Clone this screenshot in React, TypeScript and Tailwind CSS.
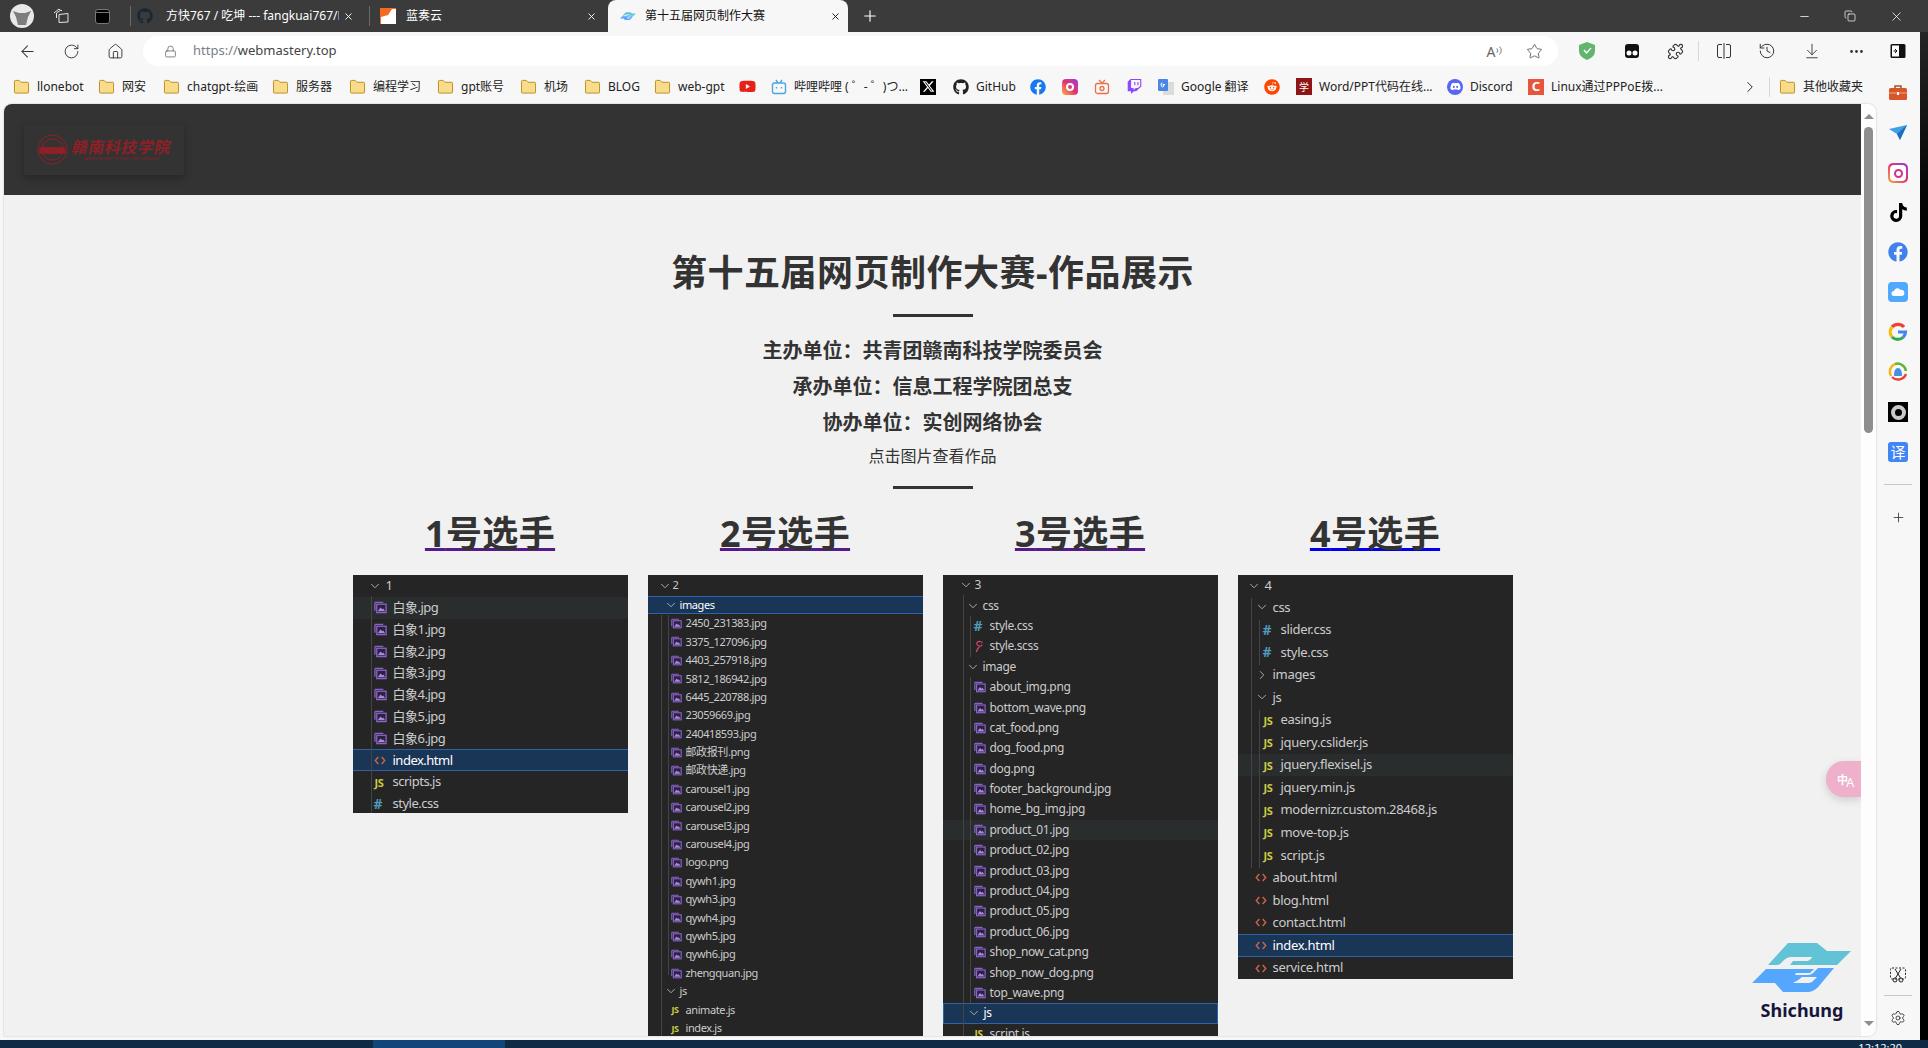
import clsx from 'clsx';
import {
  ArrowDownToLine,
  ArrowLeft,
  ChevronDown,
  ChevronRight,
  Copy,
  History,
  House,
  Lock,
  Minus,
  MoreHorizontal,
  Plus,
  Puzzle,
  RotateCw,
  Settings,
  Star,
  X,
} from 'lucide-react';
import { FaDiscord, FaFacebook, FaGithub, FaReddit, FaTwitch, FaYoutube } from 'react-icons/fa';
import { FaTiktok, FaXTwitter } from 'react-icons/fa6';

type Kind = 'open' | 'closed' | 'img' | 'js' | 'css' | 'scss' | 'html' | 'none';

type Row = {
  label: string;
  kind: Kind;
  pad: string;
  slot: string;
  selected?: boolean;
  boxed?: boolean;
  hover?: boolean;
};

function FileIcon({ kind, imgClass, jsClass }: { kind: Kind; imgClass: string; jsClass: string }) {
  if (kind === 'open') return <ChevronDown size={14} strokeWidth={1.4} className="text-[#c5c5c5]" />;
  if (kind === 'closed') return <ChevronRight size={14} strokeWidth={1.4} className="text-[#c5c5c5]" />;
  if (kind === 'img')
    return (
      <svg viewBox="0 0 14 14" className={imgClass}>
        <path d="M1 1.500h9M1 1.500v9" stroke="#8a63c9" strokeWidth="1.400" fill="none" />
        <rect x="3" y="3.500" width="10" height="9" fill="#2b2140" stroke="#8a63c9" strokeWidth="1.400" />
        <path d="M4 11l3-4 2 2 1-1 2 3z" fill="#a98ad9" />
      </svg>
    );
  if (kind === 'js')
    return <span className={clsx('ml-px leading-none font-bold text-[#cbcb41]', jsClass)}>JS</span>;
  if (kind === 'css')
    return <span className="text-[14px] leading-none font-bold text-[#519aba]">#</span>;
  if (kind === 'scss')
    return (
      <svg viewBox="0 0 12 14" className="h-[13px] w-[11px]">
        <path
          d="M9 3.500C9 1.500 5 .5 3.500 2.500 2 4.500 4 6.500 7 6.500 8.500 6.500 9 5.500 8 5M6 7c-2 2-3 4-3.500 6"
          stroke="#cd4a6b"
          strokeWidth="1.300"
          fill="none"
        />
      </svg>
    );
  if (kind === 'html')
    return (
      <svg viewBox="0 0 14 12" className="h-[11px] w-[12px]">
        <path d="M5 2L1.500 6 5 10M9 2l3.500 4L9 10" stroke="#c9634a" strokeWidth="1.700" fill="none" />
      </svg>
    );
  return null;
}

function Tree({
  rows,
  rowClass,
  guides,
  panelClass,
  imgClass = 'h-[12px] w-[12px]',
  jsClass = 'text-[10px]',
}: {
  rows: Row[];
  rowClass: string;
  guides: string[];
  panelClass?: string;
  imgClass?: string;
  jsClass?: string;
}) {
  return (
    <div className={clsx('relative w-[275px] bg-[#252526] text-[#cccccc]', panelClass)}>
      {rows.map((row, i) => (
        <div
          key={i}
          className={clsx(
            'flex items-center whitespace-nowrap',
            rowClass,
            row.pad,
            row.selected && 'border-y border-[#2f62a8] bg-[#1a3657] text-white',
            row.boxed && 'border border-[#2f62a8] bg-[#1a3657] text-white',
            row.hover && 'bg-[#2a2d2e]',
          )}
        >
          <span className={clsx('flex shrink-0 items-center', row.slot)}>
            <FileIcon kind={row.kind} imgClass={imgClass} jsClass={jsClass} />
          </span>
          <span>{row.label}</span>
        </div>
      ))}
      {guides.map((g) => (
        <div key={g} className={clsx('absolute w-px bg-[#444444]', g)} />
      ))}
    </div>
  );
}

const f1 = { pad: 'pl-[21px]', slot: 'w-[19px]' };
const tree1: Row[] = [
  { label: '1', kind: 'open', pad: 'pl-[15px]', slot: 'w-[18px]' },
  { label: '白象.jpg', kind: 'img', ...f1, hover: true },
  { label: '白象1.jpg', kind: 'img', ...f1 },
  { label: '白象2.jpg', kind: 'img', ...f1 },
  { label: '白象3.jpg', kind: 'img', ...f1 },
  { label: '白象4.jpg', kind: 'img', ...f1 },
  { label: '白象5.jpg', kind: 'img', ...f1 },
  { label: '白象6.jpg', kind: 'img', ...f1 },
  { label: 'index.html', kind: 'html', ...f1, selected: true },
  { label: 'scripts.js', kind: 'js', ...f1 },
  { label: 'style.css', kind: 'css', ...f1 },
];

const f2 = { pad: 'pl-[23px]', slot: 'w-[15px]' };
const d2 = { pad: 'pl-[16px]', slot: 'w-[16px]' };
const tree2: Row[] = [
  { label: '2', kind: 'open', pad: 'pl-[10px]', slot: 'w-[15px]' },
  { label: 'images', kind: 'open', ...d2, selected: true },
  ...[
    '2450_231383.jpg',
    '3375_127096.jpg',
    '4403_257918.jpg',
    '5812_186942.jpg',
    '6445_220788.jpg',
    '23059669.jpg',
    '240418593.jpg',
    '邮政报刊.png',
    '邮政快递.jpg',
    'carousel1.jpg',
    'carousel2.jpg',
    'carousel3.jpg',
    'carousel4.jpg',
    'logo.png',
    'qywh1.jpg',
    'qywh3.jpg',
    'qywh4.jpg',
    'qywh5.jpg',
    'qywh6.jpg',
    'zhengquan.jpg',
  ].map((label): Row => ({ label, kind: 'img', ...f2 })),
  { label: 'js', kind: 'open', ...d2 },
  { label: 'animate.js', kind: 'js', ...f2 },
  { label: 'index.js', kind: 'js', ...f2 },
];

const f3 = { pad: 'pl-[31px]', slot: 'w-[16px]' };
const d3 = { pad: 'pl-[23px]', slot: 'w-[17px]' };
const tree3: Row[] = [
  { label: '3', kind: 'open', pad: 'pl-[16px]', slot: 'w-[16px]' },
  { label: 'css', kind: 'open', ...d3 },
  { label: 'style.css', kind: 'css', ...f3 },
  { label: 'style.scss', kind: 'scss', ...f3 },
  { label: 'image', kind: 'open', ...d3 },
  { label: 'about_img.png', kind: 'img', ...f3 },
  { label: 'bottom_wave.png', kind: 'img', ...f3 },
  { label: 'cat_food.png', kind: 'img', ...f3 },
  { label: 'dog_food.png', kind: 'img', ...f3 },
  { label: 'dog.png', kind: 'img', ...f3 },
  { label: 'footer_background.jpg', kind: 'img', ...f3 },
  { label: 'home_bg_img.jpg', kind: 'img', ...f3 },
  { label: 'product_01.jpg', kind: 'img', ...f3, hover: true },
  { label: 'product_02.jpg', kind: 'img', ...f3 },
  { label: 'product_03.jpg', kind: 'img', ...f3 },
  { label: 'product_04.jpg', kind: 'img', ...f3 },
  { label: 'product_05.jpg', kind: 'img', ...f3 },
  { label: 'product_06.jpg', kind: 'img', ...f3 },
  { label: 'shop_now_cat.png', kind: 'img', ...f3 },
  { label: 'shop_now_dog.png', kind: 'img', ...f3 },
  { label: 'top_wave.png', kind: 'img', ...f3 },
  { label: 'js', kind: 'open', ...d3, boxed: true },
  { label: 'script.js', kind: 'js', ...f3 },
];

const f4 = { pad: 'pl-[25px]', slot: 'w-[18px]' };
const d4 = { pad: 'pl-[17px]', slot: 'w-[18px]' };
const tree4: Row[] = [
  { label: '4', kind: 'open', pad: 'pl-[9px]', slot: 'w-[18px]' },
  { label: 'css', kind: 'open', ...d4 },
  { label: 'slider.css', kind: 'css', ...f4 },
  { label: 'style.css', kind: 'css', ...f4 },
  { label: 'images', kind: 'closed', ...d4 },
  { label: 'js', kind: 'open', ...d4 },
  { label: 'easing.js', kind: 'js', ...f4 },
  { label: 'jquery.cslider.js', kind: 'js', ...f4 },
  { label: 'jquery.flexisel.js', kind: 'js', ...f4, hover: true },
  { label: 'jquery.min.js', kind: 'js', ...f4 },
  { label: 'modernizr.custom.28468.js', kind: 'js', ...f4 },
  { label: 'move-top.js', kind: 'js', ...f4 },
  { label: 'script.js', kind: 'js', ...f4 },
  { label: 'about.html', kind: 'html', ...d4 },
  { label: 'blog.html', kind: 'html', ...d4 },
  { label: 'contact.html', kind: 'html', ...d4 },
  { label: 'index.html', kind: 'html', ...d4, selected: true },
  { label: 'service.html', kind: 'html', ...d4 },
];

function Folder() {
  return (
    <svg viewBox="0 0 18 16" className="h-[15px] w-[17px] shrink-0">
      <path
        d="M1.500 14V2.500a1 1 0 0 1 1-1h4l2 2h7a1 1 0 0 1 1 1V14a1 1 0 0 1-1 1h-13a1 1 0 0 1-1-1z"
        fill="#f8dc8a"
        stroke="#b98d22"
      />
    </svg>
  );
}

function Bookmark({ label, width, icon }: { label?: string; width: string; icon?: React.ReactNode }) {
  return (
    <div className={clsx('flex shrink-0 items-center gap-[7px]', width)}>
      {icon ?? <Folder />}
      {label && <span className="whitespace-nowrap">{label}</span>}
    </div>
  );
}

function ShichungMark({ className }: { className: string }) {
  return (
    <svg viewBox="0 0 100 50" className={className}>
      <path
        d="M16 23L36 1h29l10 8h24L85 23H38l3-4h14q4-1 5-4H39q-4 0-7 3l-4 4q-1 1-4 1z"
        fill="#62c3d6"
      />
      <path
        d="M0 41L14 27h48l-4 4H44l-1 2h13q3 0 5-2l5-5h16L67 44q-4 5-10 6H31l-8-9z"
        fill="#55a6ff"
      />
      <path d="M41 41h16q3 0 5-3l3-3H50q-3 3-9 6z" fill="#f1f1f1" />
    </svg>
  );
}

function TabBar() {
  return (
    <div className="flex h-8 shrink-0 items-center bg-[#3b3b3b] text-xs text-white">
      <svg viewBox="0 0 24 24" className="ml-[10px] h-6 w-6 shrink-0">
        <circle cx="12" cy="12" r="12" fill="#e8e8e8" />
        <path d="M3 7l6 2h6l6-2-3 6-2 8h-8l-2-8z" fill="#7d7d7d" />
      </svg>
      <svg viewBox="0 0 18 18" fill="none" stroke="#e5e5e5" className="ml-[18px] h-[18px] w-[18px] shrink-0">
        <path d="M2 6l5-4 1 1M4.500 11V6l4.500-3 1 1M7 15.500V7.500l9-1v8.500z" />
      </svg>
      <div className="ml-[25px] h-[15px] w-[15px] shrink-0 rounded-[3px] border border-[#777] bg-black">
        <div className="h-[3px] border-b border-[#777]" />
      </div>
      <div className="ml-[20px] h-5 w-px shrink-0 bg-[#6a6a6a]" />
      <div className="flex w-[238px] shrink-0 items-center pl-[6px]">
        <FaGithub size={16} className="shrink-0 text-[#1d2733]" />
        <span className="ml-[13px] w-[173px] overflow-hidden whitespace-nowrap">
          方快767 / 吃坤 --- fangkuai767/EatKun
        </span>
        <X size={11} className="ml-[4px] shrink-0" />
      </div>
      <div className="h-5 w-px shrink-0 bg-[#6a6a6a]" />
      <div className="flex w-[238px] shrink-0 items-center pl-[10px]">
        <svg viewBox="0 0 16 16" className="h-4 w-4 shrink-0">
          <rect width="16" height="16" fill="#f26b21" />
          <path d="M1 16V9l7-2 4-6h4v15z" fill="#fff" />
        </svg>
        <span className="ml-[10px] w-[180px]">蓝奏云</span>
        <X size={11} className="shrink-0" />
      </div>
      <div className="flex h-8 w-[240px] shrink-0 items-center self-end rounded-t-lg bg-[#f7f7f7] pl-[12px] text-[#111]">
        <ShichungMark className="h-4 w-4 shrink-0" />
        <span className="ml-[9px] w-[185px]">第十五届网页制作大赛</span>
        <X size={11} className="shrink-0" />
      </div>
      <Plus size={18} strokeWidth={1.5} className="ml-[13px] shrink-0" />
      <div className="ml-auto flex items-center pr-[24px]">
        <Minus size={13} strokeWidth={1.4} />
        <Copy size={12} strokeWidth={1.4} className="ml-[33px]" />
        <X size={15} strokeWidth={1.2} className="ml-[33px]" />
      </div>
    </div>
  );
}

function Toolbar() {
  return (
    <div className="flex h-[38px] shrink-0 items-center text-[#333]">
      <ArrowLeft size={19} strokeWidth={1.3} className="ml-[18px] shrink-0" />
      <RotateCw size={17} strokeWidth={1.3} className="ml-[26px] shrink-0" />
      <House size={17} strokeWidth={1.3} className="ml-[27px] shrink-0" />
      <div className="ml-[19px] flex h-[30px] w-[1415px] shrink-0 items-center rounded-full bg-white pl-[21px] text-[13px]">
        <Lock size={13} strokeWidth={1.3} className="shrink-0 text-[#555]" />
        <span className="ml-[16px] text-[#444]">
          <span className="text-[#78808a]">https://</span>webmastery.top
        </span>
        <span className="ml-[1150px] text-[14px] text-[#666]">A</span>
        <svg viewBox="0 0 8 12" fill="none" stroke="#666" className="h-3 w-[7px]">
          <path d="M1 3q2 2 0 5M4 1q4 4 0 9" />
        </svg>
        <Star size={17} strokeWidth={1.2} className="ml-[23px] text-[#555]" />
      </div>
      <svg viewBox="0 0 16 18" className="ml-[21px] h-[18px] w-4 shrink-0">
        <path d="M8 0l8 3v6q0 6-8 9-8-3-8-9V3z" fill="#62b56f" />
        <path d="M5 8l2.500 3L12 6" stroke="#fff" strokeWidth="1.400" fill="none" />
      </svg>
      <svg viewBox="0 0 16 16" className="ml-[29px] h-4 w-4 shrink-0">
        <rect x="1" y="1" width="14" height="14" rx="3" fill="#111" />
        <circle cx="5" cy="10" r="2.500" fill="#fff" />
        <circle cx="11" cy="10" r="2.500" fill="#fff" />
      </svg>
      <Puzzle size={17} strokeWidth={1.6} className="ml-[27px] shrink-0" />
      <div className="ml-[14px] h-5 w-px shrink-0 bg-[#d8d8d8]" />
      <svg viewBox="0 0 16 16" fill="none" stroke="#333" className="ml-[17px] h-4 w-4 shrink-0">
        <path d="M6 1.500H3a1.500 1.500 0 0 0-1.500 1.500v10A1.500 1.500 0 0 0 3 14.500h3M10 1.500h3A1.500 1.500 0 0 1 14.500 3v10a1.500 1.500 0 0 1-1.500 1.500h-3M8 0v16" />
      </svg>
      <History size={18} strokeWidth={1.3} className="ml-[26px] shrink-0" />
      <ArrowDownToLine size={18} strokeWidth={1.2} className="ml-[27px] shrink-0" />
      <MoreHorizontal size={17} className="ml-[27px] shrink-0" />
      <svg viewBox="0 0 16 16" className="ml-[25px] h-4 w-4 shrink-0">
        <rect x="0.500" y="1" width="15" height="14" rx="1.500" fill="#111" />
        <rect x="2" y="2.500" width="7" height="11" fill="#fff" />
        <path d="M3.500 8h3M5 6l2 2-2 2" stroke="#111" fill="none" />
      </svg>
    </div>
  );
}

function BookmarksBar() {
  return (
    <div className="flex h-[34px] shrink-0 items-center pb-px pl-[13px] text-xs text-[#222]">
      <Bookmark label="llonebot" width="w-[85px]" />
      <Bookmark label="网安" width="w-[65px]" />
      <Bookmark label="chatgpt-绘画" width="w-[109px]" />
      <Bookmark label="服务器" width="w-[77px]" />
      <Bookmark label="编程学习" width="w-[88px]" />
      <Bookmark label="gpt账号" width="w-[83px]" />
      <Bookmark label="机场" width="w-[64px]" />
      <Bookmark label="BLOG" width="w-[70px]" />
      <Bookmark label="web-gpt" width="w-[85px]" />
      <Bookmark width="w-[32px]" icon={<FaYoutube size={17} className="text-[#e62117]" />} />
      <Bookmark
        label="哔哩哔哩 ( ゜- ゜)つ..."
        width="w-[149px]"
        icon={
          <svg viewBox="0 0 16 16" fill="none" stroke="#4aa6e0" strokeWidth="1.400" className="h-4 w-4 shrink-0">
            <rect x="1.500" y="4" width="13" height="10.500" rx="2" />
            <path d="M5 1l2 3M11 1L9 4M5.500 8v1.500M10.500 8v1.500" />
          </svg>
        }
      />
      <Bookmark
        width="w-[33px]"
        icon={
          <span className="flex h-4 w-4 items-center justify-center bg-black">
            <FaXTwitter size={13} className="text-white" />
          </span>
        }
      />
      <Bookmark label="GitHub" width="w-[77px]" icon={<FaGithub size={16} className="text-[#222]" />} />
      <Bookmark width="w-[32px]" icon={<FaFacebook size={16} className="text-[#1877f2]" />} />
      <Bookmark
        width="w-[32px]"
        icon={
          <span className="flex h-4 w-4 items-center justify-center rounded-[4px] bg-gradient-to-tr from-[#f9a825] via-[#e1306c] to-[#9b2fd8]">
            <span className="h-[8px] w-[8px] rounded-full border-2 border-white" />
          </span>
        }
      />
      <Bookmark
        width="w-[33px]"
        icon={
          <svg viewBox="0 0 16 16" fill="none" stroke="#e8714a" strokeWidth="1.300" className="h-4 w-4 shrink-0">
            <rect x="1.500" y="4.500" width="13" height="10" rx="2" />
            <path d="M5 1l3 3 3-3" />
            <circle cx="8" cy="9.500" r="2" />
          </svg>
        }
      />
      <Bookmark width="w-[31px]" icon={<FaTwitch size={15} className="text-[#9146ff]" />} />
      <Bookmark
        label="Google 翻译"
        width="w-[106px]"
        icon={
          <svg viewBox="0 0 16 16" className="h-4 w-4 shrink-0">
            <rect x="5" y="3" width="11" height="13" fill="#dbdbdb" />
            <rect width="10" height="12" rx="1" fill="#4a86e8" />
            <path d="M7 5.500H5v1h1q-.5 1.500-1.500 1.500T3 6t1.500-2" stroke="#fff" fill="none" />
          </svg>
        }
      />
      <Bookmark width="w-[32px]" icon={<FaReddit size={16} className="text-[#ff4500]" />} />
      <Bookmark
        label="Word/PPT代码在线..."
        width="w-[151px]"
        icon={
          <span className="flex h-[17px] w-4 items-center justify-center bg-[#8f1515] text-[10px] leading-none text-white">
            学
          </span>
        }
      />
      <Bookmark
        label="Discord"
        width="w-[81px]"
        icon={
          <span className="flex h-4 w-4 items-center justify-center rounded-full bg-[#5865f2]">
            <FaDiscord size={11} className="text-white" />
          </span>
        }
      />
      <Bookmark
        label="Linux通过PPPoE拨..."
        width="w-[213px]"
        icon={
          <span className="flex h-4 w-4 items-center justify-center bg-[#e8553a] text-[13px] leading-none font-bold text-white">
            C
          </span>
        }
      />
      <ChevronRight size={18} strokeWidth={1.3} className="shrink-0" />
      <div className="ml-[10px] h-5 w-px shrink-0 bg-[#d8d8d8]" />
      <Bookmark label="其他收藏夹" width="ml-[9px]" />
    </div>
  );
}

function Sidebar() {
  return (
    <div className="flex w-[44px] shrink-0 flex-col items-center">
      <div className="flex flex-col items-center gap-[20px]">
        <svg viewBox="0 0 20 20" className="-mt-[21px] h-5 w-5">
          <path d="M7 5V3h6v2" stroke="#a9502c" strokeWidth="1.500" fill="none" />
          <rect x="1" y="5" width="18" height="12" rx="1.500" fill="#d9562a" />
          <rect x="1" y="9.500" width="18" height="1" fill="#f4a582" />
          <rect x="9" y="9" width="2" height="3" fill="#fff" />
        </svg>
        <svg viewBox="0 0 20 20" className="h-5 w-5">
          <path d="M1 6l18-4-7 15-3-6z" fill="#3f9fe8" />
          <path d="M9 11l10-9-7 15z" fill="#1d6fb8" />
        </svg>
        <span className="flex h-[20px] w-[20px] items-center justify-center rounded-[5px] bg-gradient-to-tr from-[#f9a825] via-[#e1306c] to-[#9b2fd8]">
          <span className="flex h-4 w-4 items-center justify-center rounded-[4px] bg-white">
            <span className="h-[9px] w-[9px] rounded-full border-2 border-[#d6318a]" />
          </span>
        </span>
        <FaTiktok size={19} className="text-black" />
        <FaFacebook size={20} className="text-[#4081ec]" />
        <span className="flex h-5 w-5 items-center justify-center rounded-[4px] bg-[#50a8ff]">
          <svg viewBox="0 0 14 10" className="h-[10px] w-[14px]">
            <path d="M3 9a2.500 2.500 0 0 1 0-5 3.500 3.500 0 0 1 6.500-1A3 3 0 0 1 11 9z" fill="#fff" />
          </svg>
        </span>
        <svg viewBox="0 0 20 20" fill="none" strokeWidth="3.200" className="h-5 w-5">
          <path d="M16 5A8 8 0 0 0 4 5" stroke="#ea4335" />
          <path d="M4 5a8 8 0 0 0 0 10" stroke="#fbbc05" />
          <path d="M4 15a8 8 0 0 0 11.500 0" stroke="#34a853" />
          <path d="M15.500 15a8 8 0 0 0 2-5H10" stroke="#4285f4" />
        </svg>
        <svg viewBox="0 0 20 20" fill="none" strokeWidth="2.400" className="h-5 w-5">
          <path d="M3 14A8.500 8.500 0 0 1 7 2" stroke="#f5b50e" />
          <path d="M7 2a8.500 8.500 0 0 1 11 7" stroke="#5fb336" />
          <path d="M18 12a8.500 8.500 0 0 1-14 3" stroke="#e8452c" />
          <path d="M6 14q0-8 4-8t4 8z" fill="#4a90e2" stroke="none" />
        </svg>
        <span className="flex h-5 w-5 items-center justify-center bg-black">
          <span className="h-[15px] w-[15px] rounded-full border-[4px] border-[#c9c9c9]" />
        </span>
        <span className="flex h-5 w-5 items-center justify-center rounded-[3px] bg-[#4285f4] text-[15px] leading-none text-white">
          译
        </span>
      </div>
      <div className="mt-[22px] h-px w-7 bg-[#c8c8c8]" />
      <Plus size={15} strokeWidth={1.2} className="mt-[25px] text-[#222]" />
      <div className="mt-auto flex flex-col items-center pb-[10px]">
        <svg viewBox="0 0 16 16" fill="none" stroke="#222" className="h-4 w-4">
          <rect x="0.500" y="1" width="15" height="11" rx="1.500" strokeDasharray="2 1.500" />
          <path d="M5 2l5.500 9M11 2l-5.500 9" />
          <circle cx="5" cy="13" r="2" />
          <circle cx="11" cy="13" r="2" />
        </svg>
        <div className="mt-[12px] h-px w-7 bg-[#c8c8c8]" />
        <Settings size={16} strokeWidth={1.2} className="mt-[14px] text-[#222]" />
      </div>
    </div>
  );
}

function Player({ no, underline, children }: { no: string; underline: string; children: React.ReactNode }) {
  return (
    <div className="flex flex-col items-center">
      <h2
        className={clsx(
          'mb-4 h-[50px] text-[36px] leading-[50px] font-bold tracking-[0.4px] text-[#333] underline decoration-[3px] underline-offset-[1px]',
          underline,
        )}
      >
        {no}号选手
      </h2>
      {children}
    </div>
  );
}

export default function App() {
  return (
    <div className="flex h-[1048px] w-[1928px] flex-col overflow-hidden bg-black font-['Noto_Sans','Noto_Sans_CJK_SC',sans-serif]">
      <TabBar />
      <div className="flex min-h-0 flex-1">
        <div className="flex w-[1920px] shrink-0 flex-col bg-[#f7f7f7]">
          <Toolbar />
          <BookmarksBar />
          <div className="flex min-h-0 flex-1 pb-1 pl-1">
            <div className="flex min-w-0 flex-1 overflow-hidden rounded-t-lg rounded-br-lg shadow-[0_0_2px_rgba(0,0,0,0.25)]">
              <main className="relative min-w-0 flex-1 overflow-hidden bg-[#f1f1f1] text-[#333]">
                <header className="flex h-[91px] items-center bg-[#333333] pl-5">
                  <div className="flex h-[50px] w-[160px] items-center bg-[#333333] pl-[13px] shadow-[0_3px_8px_rgba(0,0,0,0.25)]">
                    <svg viewBox="0 0 32 32" fill="none" stroke="#8f2027" className="h-[31px] w-[31px] shrink-0">
                      <circle cx="16" cy="16" r="15" />
                      <circle cx="16" cy="16" r="11" />
                      <path d="M3 14h26v6H3z" fill="#8f2027" />
                    </svg>
                    <div className="ml-[4px] flex flex-col items-center">
                      <span className="-skew-x-12 text-[16px] leading-[20px] font-bold tracking-[0.5px] whitespace-nowrap text-[#8f2027]">
                        赣南科技学院
                      </span>
                      <span className="text-[3px] leading-[5px] whitespace-nowrap text-[#8f2027]">
                        GANNAN UNIVERSITY OF SCIENCE AND TECHNOLOGY
                      </span>
                    </div>
                  </div>
                </header>

                <div className="flex flex-col items-center">
                  <h1 className="mt-[53px] text-[36px] leading-[50px] font-bold tracking-[0.5px]">
                    第十五届网页制作大赛-作品展示
                  </h1>
                  <div className="mt-4 h-[3px] w-20 bg-[#333]" />
                  <div className="mt-4 text-center text-[20px] leading-[36px] font-bold">
                    <p>{'主办单位\uFF1A共青团赣南科技学院委员会'}</p>
                    <p>{'承办单位\uFF1A信息工程学院团总支'}</p>
                    <p>{'协办单位\uFF1A实创网络协会'}</p>
                  </div>
                  <p className="mt-[3px] text-base leading-[24px]">点击图片查看作品</p>
                  <div className="mt-[18px] h-[3px] w-20 bg-[#333]" />

                  <div className="mt-5 grid w-[1180px] grid-cols-4">
                    <Player no="1" underline="decoration-[#551a8b]">
                      <Tree
                        rows={tree1}
                        rowClass="h-[21.8px] text-[13px] tracking-[-0.5px]"
                        guides={['left-[18px] top-[21px] bottom-0']}
                        panelClass="h-[238px] overflow-hidden"
                        imgClass="h-[13px] w-[13px]"
                        jsClass="text-[11px]"
                      />
                    </Player>
                    <Player no="2" underline="decoration-[#551a8b]">
                      <Tree
                        rows={tree2}
                        rowClass="h-[18.4px] text-[11px] tracking-[-0.4px] first:h-[21px]"
                        guides={['left-[13px] top-[40px] bottom-0', 'left-[20px] top-[40px] h-[360px]']}
                        imgClass="h-[11px] w-[11px]"
                        jsClass="text-[9px]"
                      />
                    </Player>
                    <Player no="3" underline="decoration-[#551a8b]">
                      <Tree
                        rows={tree3}
                        rowClass="h-[20.4px] text-[12px] tracking-[-0.35px]"
                        guides={[
                          'left-[20px] top-[20px] bottom-0',
                          'left-[27px] top-[41px] h-[41px]',
                          'left-[27px] top-[102px] h-[326px]',
                        ]}
                      />
                    </Player>
                    <Player no="4" underline="decoration-[#0000ee]">
                      <Tree
                        rows={tree4}
                        rowClass="h-[22.55px] text-[13px] tracking-[-0.3px] first:h-[21px]"
                        guides={[
                          'left-[13px] top-[23px] h-[270px]',
                          'left-[21px] top-[45px] h-[45px]',
                          'left-[21px] top-[135px] h-[158px]',
                        ]}
                        jsClass="text-[11px]"
                      />
                    </Player>
                  </div>
                </div>

                {/* floating translate button */}
                <div className="absolute top-[657px] right-0 flex h-9 w-[35px] items-center rounded-l-full bg-[#eeb0cb] pl-[11px] text-white shadow-[0_3px_8px_rgba(0,0,0,0.15)]">
                  <span className="text-[11px] leading-[11px] font-bold">中</span>
                  <span className="-ml-[2px] self-end pb-[8px] text-[13px] leading-[13px]">A</span>
                </div>

                {/* site watermark */}
                <div className="absolute top-[838px] right-[9px] flex flex-col items-center">
                  <ShichungMark className="h-[50px] w-[100px]" />
                  <span className="mt-[6px] text-[18px] leading-[24px] font-bold text-[#16163c]">Shichung</span>
                </div>
              </main>

              {/* scrollbar */}
              <div className="flex w-[15px] shrink-0 flex-col items-center bg-[#fdfdfd]">
                <div className="mt-[10px] h-0 w-0 border-x-[5px] border-b-[5px] border-x-transparent border-b-[#8e8e8e]" />
                <div className="mt-[8px] h-[306px] w-[9px] rounded-full bg-[#8e8e8e]" />
                <div className="mt-auto mb-[10px] h-0 w-0 border-x-[5px] border-t-[5px] border-x-transparent border-t-[#8e8e8e]" />
              </div>
            </div>
            <Sidebar />
          </div>
        </div>
        <div className="flex-1 bg-gradient-to-b from-[#262626] to-black to-30%" />
      </div>
      <div className="flex h-2 shrink-0 items-start justify-end overflow-hidden bg-[#0e2a45] pr-[26px] text-[11px] leading-[16px] text-white">
        <div className="mr-auto ml-[373px] h-2 w-[132px] bg-[#12457a]" />
        12:12:20
      </div>
    </div>
  );
}
